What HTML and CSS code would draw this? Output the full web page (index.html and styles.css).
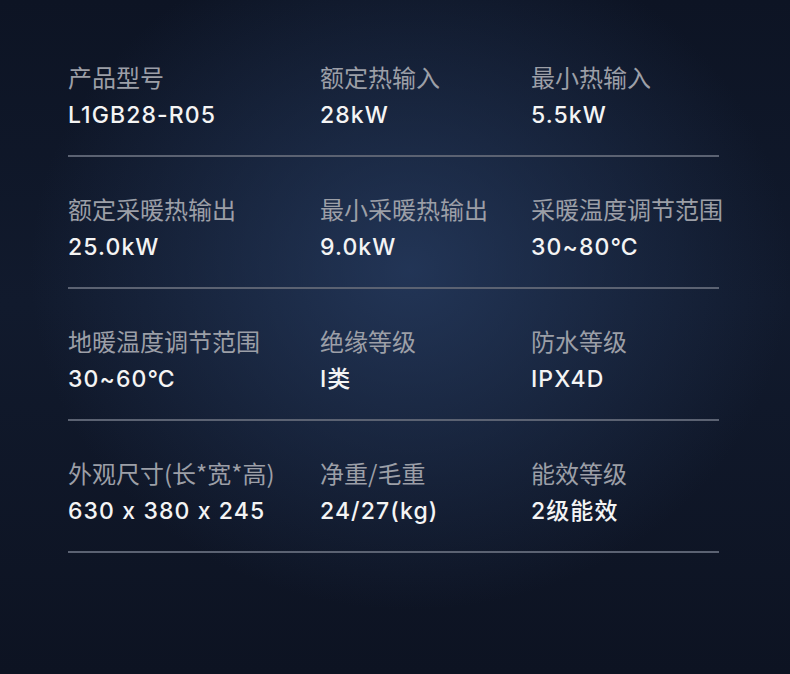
FILE: index.html
```html
<!DOCTYPE html>
<html lang="zh-CN">
<head>
<meta charset="utf-8">
<link rel="stylesheet" href="styles.css">
</head>
<body>
<main class="specs">
  <section class="row">
    <div class="cell"><div class="label">产品型号</div><div class="value">L1GB28-R05</div></div>
    <div class="cell"><div class="label">额定热输入</div><div class="value">28kW</div></div>
    <div class="cell"><div class="label">最小热输入</div><div class="value">5.5kW</div></div>
  </section>
  <section class="row">
    <div class="cell"><div class="label">额定采暖热输出</div><div class="value">25.0kW</div></div>
    <div class="cell"><div class="label">最小采暖热输出</div><div class="value">9.0kW</div></div>
    <div class="cell"><div class="label">采暖温度调节范围</div><div class="value">30~80℃</div></div>
  </section>
  <section class="row">
    <div class="cell"><div class="label">地暖温度调节范围</div><div class="value">30~60℃</div></div>
    <div class="cell"><div class="label">绝缘等级</div><div class="value">I类</div></div>
    <div class="cell"><div class="label">防水等级</div><div class="value">IPX4D</div></div>
  </section>
  <section class="row">
    <div class="cell"><div class="label">外观尺寸(长*宽*高)</div><div class="value">630 x 380 x 245</div></div>
    <div class="cell"><div class="label">净重/毛重</div><div class="value">24/27(kg)</div></div>
    <div class="cell"><div class="label">能效等级</div><div class="value">2级能效</div></div>
  </section>
</main>
</body>
</html>
```
FILE: styles.css
```css
html, body {
  margin: 0;
  padding: 0;
  width: 790px;
  height: 674px;
  overflow: hidden;
}
body {
  background:
    radial-gradient(ellipse 380px 340px at 410px 270px, rgba(40, 62, 100, 0.75), rgba(40, 62, 100, 0) 100%),
    linear-gradient(180deg, #0d1424 0%, #111a2d 45%, #0d1322 100%);
  font-family: "Noto Sans CJK SC", "Noto Sans", sans-serif;
}
.specs {
  padding: 25px 71px 0 68px;
}
.row {
  display: grid;
  grid-template-columns: 252px 211px 1fr;
  padding: 37px 0 25px;
  border-bottom: 2px solid #5b6272;
}
.label {
  font-size: 24px;
  line-height: 30px;
  color: #9c9fa7;
  white-space: nowrap;
}
.value {
  margin-top: 8px;
  font-family: "Inter", "Noto Sans CJK SC", sans-serif;
  font-size: 23px;
  line-height: 30px;
  font-weight: 500;
  color: #f4f4f4;
  white-space: nowrap;
  letter-spacing: 1.1px;
}
```
